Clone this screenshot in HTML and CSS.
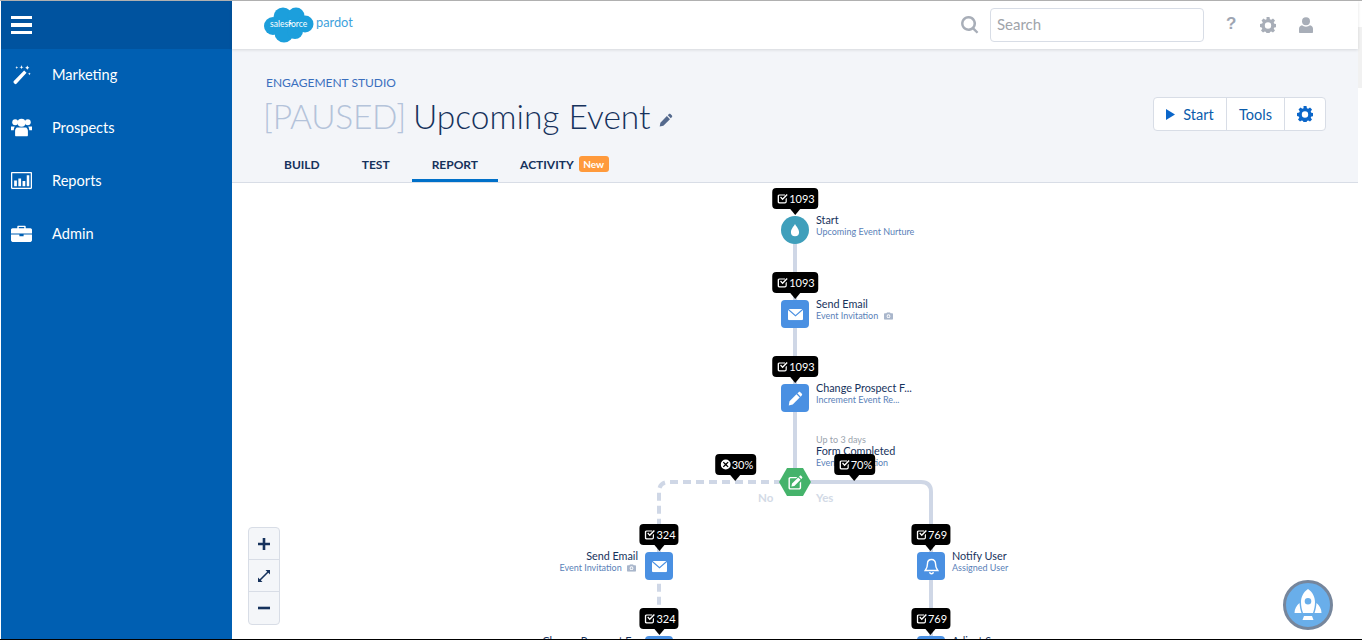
FILE: index.html

```html
<!DOCTYPE html>
<html lang="en">
<head>
<meta charset="UTF-8">
<meta name="viewport" content="width=device-width, initial-scale=1.0">
<title>Upcoming Event - Engagement Studio</title>
<link rel="stylesheet" href="styles.css">
</head>
<body>

<svg class="sprite" width="0" height="0">
  <symbol id="i-check" viewBox="0 0 12 12"><path d="M2.200 1.500h6.300v1.300H2.600c-.4 0-.7.300-.7.700v5.800c0 .4.300.7.700.7h5.800c.4 0 .7-.3.7-.7V6.600l1.300-1.300v4c0 1.200-.9 2.100-2 2.100H2.200c-1.100 0-2-.9-2-2.100V3.500c0-1.100.9-2 2-2z"/><path d="M3.100 4.900l1-1 1.700 1.700L10.300 1l1.100 1.100-5.600 5.700z"/></symbol>
  <symbol id="i-cross" viewBox="0 0 12 12"><path fill-rule="evenodd" d="M6 .6a5.400 5.400 0 1 0 0 10.800A5.400 5.400 0 0 0 6 .6zM3.800 3l2.200 2 2.200-2 .9.900-2.100 2.100 2.100 2.100-.9.900L6 7 3.800 9l-.9-.9L5 6 2.900 3.900z"/></symbol>
  <symbol id="i-camera" viewBox="0 0 12 10"><path fill-rule="evenodd" d="M4 0h4l.8 1.400H11c.6 0 1 .4 1 1V9c0 .6-.4 1-1 1H1c-.6 0-1-.4-1-1V2.400c0-.6.4-1 1-1h2.200zM6 2.800a2.500 2.500 0 1 0 0 5 2.500 2.500 0 0 0 0-5zM6 4a1.300 1.300 0 1 1 0 2.600A1.300 1.300 0 0 1 6 4z"/></symbol>
  <symbol id="i-mail" viewBox="0 0 16 12"><path d="M.6 0h14.800L8 6.400z"/><path d="M0 1.200v9.600C0 11.500.5 12 1.200 12h13.600c.7 0 1.200-.5 1.200-1.200V1.200L8 8.200z"/></symbol>
  <symbol id="i-pencil" viewBox="0 0 16 16"><path d="M11.400 1.200c.5-.5 1.200-.5 1.700 0l1.700 1.700c.5.500.5 1.200 0 1.700L13.500 6 10 2.500zM9 3.500L12.500 7 5 14.500 .8 15.500 1.600 11z"/></symbol>
  <symbol id="i-gear" viewBox="0 0 16 16"><path fill-rule="evenodd" d="M6.500 0h3l.4 2.200 1.300.6L13 1.500l2 2.100-1.300 1.800.6 1.300 2.200.4v3l-2.200.4-.6 1.300 1.300 1.800-2 2-1.800-1.200-1.300.5-.4 2.100h-3l-.4-2.100-1.300-.5L3 15.600l-2-2 1.300-1.800-.6-1.300L0 10V7l2.200-.4.600-1.300L1.500 3.500l2-2 1.800 1.300 1.300-.6zM8 5.300a3.200 3.200 0 1 0 0 6.400 3.200 3.200 0 0 0 0-6.400z"/></symbol>
</svg>

<aside class="sidebar">
  <div class="sidebar-top">
    <span class="burger"><i></i><i></i><i></i></span>
  </div>
  <nav class="nav-list">
    <a class="nav-item" href="#">
      <svg class="nav-icon" viewBox="0 0 20 20"><path d="M12.500 6.200l2.300 2.200L5.200 18.800c-.5.500-1.200.5-1.700 0l-.8-.8c-.5-.5-.5-1.200 0-1.700z"/><path d="M10 1l.5 1.500L12 3l-1.500.5L10 5l-.5-1.500L8 3l1.500-.5zM15.500 1.500l.7 1.300 1.300.7-1.300.7-.7 1.300-.7-1.300-1.300-.7 1.300-.7zM5.500 2l.4 1 1 .4-1 .4-.4 1-.4-1-1-.4 1-.4zM17.500 8l.4 1 1 .4-1 .4-.4 1-.4-1-1-.4 1-.4z"/></svg>
      Marketing
    </a>
    <a class="nav-item" href="#">
      <svg class="nav-icon" viewBox="0 0 20 20"><circle cx="4" cy="5" r="2.800"/><circle cx="16" cy="5" r="2.800"/><circle cx="10" cy="5.500" r="3.800"/><path d="M0 9h3.600c-.6 1-1 2.200-1 3.500H0zM20 9h-3.600c.6 1 1 2.200 1 3.500H20zM5.500 10h9c1 .8 1.600 2 1.600 3.300v4c0 .6-.4 1-.8 1H4.700c-.4 0-.8-.4-.8-1v-4c0-1.300.6-2.500 1.600-3.300z"/></svg>
      Prospects
    </a>
    <a class="nav-item" href="#">
      <svg class="nav-icon" viewBox="0 0 20 20"><path fill-rule="evenodd" d="M1 2h18c.6 0 1 .4 1 1v14c0 .6-.4 1-1 1H1c-.6 0-1-.4-1-1V3c0-.6.4-1 1-1zm.2 1.200v13.600h17.600V3.200z"/><path d="M3 10h2.600v5.500H3zM7 8h2.600v7.500H7zM11 10.500h2.600v5H11zM15 5h2.400v10.500H15z"/></svg>
      Reports
    </a>
    <a class="nav-item" href="#">
      <svg class="nav-icon" viewBox="0 0 20 20"><path fill-rule="evenodd" d="M7 2.500h6c.6 0 1 .4 1 1V5h4.500c.8 0 1.500.7 1.500 1.500V10H0V6.500C0 5.700.7 5 1.500 5H6V3.500c0-.6.4-1 1-1zM7.400 3.800V5h5.200V3.800z"/><path d="M0 11h8v1.500h4V11h8v5.500c0 .8-.7 1.500-1.500 1.500h-17C.7 18 0 17.300 0 16.500z"/></svg>
      Admin
    </a>
  </nav>
</aside>

<div class="main">
  <header class="topbar">
    <div class="logo">
      <svg class="logo-cloud" viewBox="0 0 50 36">
        <g fill="#1c9fdc">
          <circle cx="19" cy="10" r="9.500"/><circle cx="32" cy="9" r="8.500"/><circle cx="41" cy="17" r="8.500"/>
          <circle cx="9" cy="19" r="9"/><circle cx="20" cy="26" r="9.500"/><circle cx="31" cy="24" r="8"/>
        </g>
        <text x="6" y="20" class="logo-sf">salesforce</text>
      </svg>
      <span class="logo-name">pardot</span>
    </div>
    <div class="top-tools">
      <svg class="search-icon" viewBox="0 0 18 18"><path fill-rule="evenodd" d="M7.500 0a7.500 7.500 0 0 1 6 12l3.900 3.900-1.700 1.700-3.900-3.900A7.500 7.500 0 1 1 7.500 0zm0 2.500a5 5 0 1 0 0 10 5 5 0 0 0 0-10z"/></svg>
      <input class="search-box" type="text" placeholder="Search">
      <span class="help">?</span>
      <svg class="top-icon" viewBox="0 0 16 16"><use href="#i-gear"/></svg>
      <svg class="top-icon user-icon" viewBox="0 0 14 16"><circle cx="7" cy="4.200" r="4"/><path d="M3 8.300c1 .9 2.400 1.400 4 1.400s3-.5 4-1.400c1.800.5 3 1.700 3 3.400V15c0 .6-.4 1-1 1H1c-.6 0-1-.4-1-1v-3.300c0-1.700 1.200-2.900 3-3.400z"/></svg>
    </div>
  </header>

  <section class="subhead">
    <div class="subhead-row">
      <div>
        <div class="crumb">ENGAGEMENT STUDIO</div>
        <h1 class="title"><span class="paused">[PAUSED]</span> Upcoming Event <svg class="title-edit" viewBox="0 0 16 16"><use href="#i-pencil"/></svg></h1>
      </div>
      <div class="btn-group">
        <button class="btn btn-start"><svg class="play" viewBox="0 0 10 12"><path d="M0 0l10 6-10 6z"/></svg>Start</button>
        <button class="btn btn-tools">Tools</button>
        <button class="btn btn-gear"><svg viewBox="0 0 16 16"><use href="#i-gear"/></svg></button>
      </div>
    </div>
    <div class="tabs">
      <a class="tab" href="#">BUILD</a>
      <a class="tab" href="#">TEST</a>
      <a class="tab active" href="#">REPORT</a>
      <a class="tab" href="#">ACTIVITY <span class="badge-new">New</span></a>
    </div>
  </section>

  <section class="canvas">
    <svg class="links" width="1126" height="456">
      <path class="link" d="M563 47V299"/>
      <path class="link" d="M563 299H689Q699 299 699 309V467"/>
      <path class="link dashed" d="M563 299H437Q427 299 427 309V467"/>
    </svg>

    <div class="node circle n-start"><svg viewBox="0 0 12 16"><path d="M6 0c1 2.500 5 6 5 10a5 5 0 0 1-10 0C1 6 5 2.500 6 0z"/></svg></div>
    <div class="node square n-mail1"><svg viewBox="0 0 16 12"><use href="#i-mail"/></svg></div>
    <div class="node square n-field1"><svg viewBox="0 0 16 16"><use href="#i-pencil"/></svg></div>
    <div class="node hex n-form"><svg viewBox="0 0 16 16"><path d="M2.500 2h7.500L8.600 3.500H2.800c-.5 0-.8.3-.8.8v8.900c0 .5.3.8.8.8h8.900c.5 0 .8-.3.8-.8V8.500L14 7v6.500c0 1.200-1 2-2 2H2.500c-1.200 0-2-1-2-2V4c0-1.200 1-2 2-2z"/><path d="M12.500 1c.5-.5 1.200-.5 1.700 0l.8.8c.5.500.5 1.200 0 1.700l-.8.800-2.500-2.500zM10.900 2.600l2.500 2.500-6.600 6.500-3.200.7.700-3.200z"/></svg></div>
    <div class="node square n-mail2"><svg viewBox="0 0 16 12"><use href="#i-mail"/></svg></div>
    <div class="node square n-notify"><svg class="bell" viewBox="0 0 16 18" fill="none"><path d="M8 1.500c-2.800 0-4.300 2-4.300 4.600 0 4.400-1.500 5.800-2.400 7.100h13.400c-.9-1.300-2.400-2.700-2.400-7.100C12.300 3.500 10.800 1.500 8 1.500zM6 15c.2 1 1 1.800 2 1.800s1.800-.8 2-1.800"/></svg></div>
    <div class="node square n-field2"></div>
    <div class="node square n-adjust"></div>

    <div class="label l-start"><div class="label-title">Start</div><div class="label-sub">Upcoming Event Nurture</div></div>
    <div class="label l-mail1"><div class="label-title">Send Email</div><div class="label-sub">Event Invitation <svg class="cam" viewBox="0 0 12 10"><use href="#i-camera"/></svg></div></div>
    <div class="label l-field1"><div class="label-title">Change Prospect F...</div><div class="label-sub">Increment Event Re...</div></div>
    <div class="label l-form"><div class="label-note">Up to 3 days</div><div class="label-title">Form Completed</div><div class="label-sub">Event Registration</div></div>
    <div class="label left l-mail2"><div class="label-title">Send Email</div><div class="label-sub">Event Invitation <svg class="cam" viewBox="0 0 12 10"><use href="#i-camera"/></svg></div></div>
    <div class="label l-notify"><div class="label-title">Notify User</div><div class="label-sub">Assigned User</div></div>
    <div class="label left l-field2"><div class="label-title">Change Prospect F...</div></div>
    <div class="label l-adjust"><div class="label-title">Adjust Score</div></div>

    <span class="branch b-no">No</span>
    <span class="branch b-yes">Yes</span>

    <div class="stat s-start"><svg viewBox="0 0 12 12"><use href="#i-check"/></svg>1093</div>
    <div class="stat s-mail1"><svg viewBox="0 0 12 12"><use href="#i-check"/></svg>1093</div>
    <div class="stat s-field1"><svg viewBox="0 0 12 12"><use href="#i-check"/></svg>1093</div>
    <div class="stat s-no"><svg viewBox="0 0 12 12"><use href="#i-cross"/></svg>30%</div>
    <div class="stat s-yes"><svg viewBox="0 0 12 12"><use href="#i-check"/></svg>70%</div>
    <div class="stat s-mail2"><svg viewBox="0 0 12 12"><use href="#i-check"/></svg>324</div>
    <div class="stat s-notify"><svg viewBox="0 0 12 12"><use href="#i-check"/></svg>769</div>
    <div class="stat s-field2"><svg viewBox="0 0 12 12"><use href="#i-check"/></svg>324</div>
    <div class="stat s-adjust"><svg viewBox="0 0 12 12"><use href="#i-check"/></svg>769</div>

    <div class="zoom-box">
      <button class="zoom-btn"><svg viewBox="0 0 12 12"><path d="M4.700 0h2.600v4.700H12v2.600H7.300V12H4.700V7.300H0V4.700h4.700z"/></svg></button>
      <button class="zoom-btn"><svg viewBox="0 0 12 12"><path d="M7.500 0H12v4.500L10.300 2.800 2.800 10.300 4.500 12H0V7.500l1.700 1.700L9.200 1.700z"/></svg></button>
      <button class="zoom-btn"><svg viewBox="0 0 12 12"><path d="M0 4.700h12v2.600H0z"/></svg></button>
    </div>

    <div class="rocket">
      <svg viewBox="0 0 30 32"><path fill-rule="evenodd" d="M15 0c4.500 3 7 8 7 13 0 4-.8 7.500-2 11H10c-1.200-3.500-2-7-2-11 0-5 2.500-10 7-13zm0 9a3.300 3.300 0 1 0 0 6.600 3.300 3.300 0 0 0 0-6.600z"/><path d="M6.500 14c.2 3.500 1 7 2 10H1.500c0-4 2-7.500 5-10zM23.500 14c3 2.500 5 6 5 10h-7c1-3 1.800-6.500 2-10zM11 27h8l1.500 4h-11z"/></svg>
    </div>
  </section>
</div>

<div class="page-edge"><div class="edge-mark"></div></div>

</body>
</html>
```

FILE: styles.css

```css
* {
  box-sizing: border-box;
}
body {
  margin: 0;
  height: 640px;
  overflow: hidden;
  display: flex;
  border-top: 1px solid #b0b0b0;
  border-bottom: 1px solid #000;
  font-family: Lato, "Open Sans", sans-serif;
  background-color: #fff;
  color: #16325c;
}
button {
  font-family: inherit;
}
.sprite {
  position: absolute;
}

/* sidebar */
.sidebar {
  width: 231px;
  margin-left: 1px;
  background-color: #005fb2;
  flex-shrink: 0;
}
.sidebar-top {
  height: 48px;
  background-color: #00539f;
  display: flex;
  align-items: center;
  padding-left: 10px;
}
.burger {
  display: flex;
  flex-direction: column;
  gap: 4px;
  width: 21px;
}
.burger i {
  display: block;
  height: 3.500px;
  background-color: #fff;
}
.nav-list {
  margin-top: -1px;
}
.nav-item {
  height: 53px;
  display: flex;
  align-items: center;
  gap: 20px;
  padding-left: 10px;
  color: #fff;
  font-size: 14.600px;
  text-decoration: none;
}
.nav-icon {
  width: 21px;
  height: 21px;
  fill: #fff;
}

/* top bar */
.main {
  width: 1126px;
  flex-shrink: 0;
  display: flex;
  flex-direction: column;
}
.topbar {
  height: 48px;
  flex-shrink: 0;
  display: flex;
  justify-content: space-between;
  align-items: center;
  background-color: #fff;
  box-shadow: 0 1px 3px rgba(0, 0, 0, 0.12);
  position: relative;
  padding-left: 32px;
}
.logo {
  display: flex;
  align-items: center;
  gap: 2px;
  margin-bottom: 1px;
}
.logo-cloud {
  width: 50px;
  height: 36px;
}
.logo-sf {
  font-size: 8.500px;
  fill: #fff;
}
.logo-name {
  font-size: 12.800px;
  color: #3fa2dc;
  margin-bottom: 5px;
}
.top-tools {
  display: flex;
  align-items: center;
  padding-right: 44px;
}
.search-icon {
  width: 18px;
  height: 18px;
  fill: #a8aeb8;
  margin-right: 11px;
}
.search-box {
  width: 214px;
  height: 34px;
  border: 1px solid #d8dde6;
  border-radius: 4px;
  padding: 0 6px 2px 6px;
  font-family: inherit;
  font-size: 15px;
  margin-right: 22px;
}
.search-box::placeholder {
  color: #a0a4aa;
}
.help {
  width: 10px;
  font-family: "Liberation Sans", sans-serif;
  font-weight: 700;
  font-size: 17px;
  color: #9ea5b2;
  margin-right: 24px;
  margin-bottom: 2px;
}
.top-icon {
  width: 16px;
  height: 16px;
  fill: #a8aeb8;
  margin-right: 23px;
}
.user-icon {
  width: 14px;
  margin-right: 1px;
}

/* page header */
.subhead {
  height: 134px;
  flex-shrink: 0;
  background-color: #f3f5f9;
  border-bottom: 1px solid #d8dde6;
  padding: 25px 32px 0 32px;
  display: flex;
  flex-direction: column;
}
.subhead-row {
  display: flex;
  justify-content: space-between;
  align-items: flex-start;
}
.crumb {
  font-size: 12px;
  line-height: 18px;
  color: #3a6fbe;
  margin-left: 2px;
}
.title {
  margin: 4px 0 0 -1px;
  font-size: 33.500px;
  line-height: 40px;
  font-weight: 300;
  color: #16325c;
  display: flex;
  align-items: center;
  gap: 7px;
}
.paused {
  color: #b4c3da;
  letter-spacing: -0.3px;
}
.title-edit {
  width: 14px;
  height: 14px;
  fill: #54698d;
  margin-left: 1px;
  margin-top: 8px;
}
.btn-group {
  display: flex;
  height: 34px;
  margin-top: 23px;
  background-color: #fff;
  border: 1px solid #d8dde6;
  border-radius: 4px;
}
.btn {
  height: 32px;
  border: none;
  background: none;
  font-size: 14.500px;
  color: #0b5cab;
  padding: 0;
  display: flex;
  align-items: center;
  justify-content: center;
}
.btn-start {
  width: 72px;
  gap: 8px;
}
.btn-tools {
  width: 59px;
  border-left: 1px solid #d8dde6;
  border-right: 1px solid #d8dde6;
}
.btn-gear {
  width: 40px;
}
.btn-gear svg {
  width: 16px;
  height: 16px;
  fill: #0b66c9;
}
.play {
  width: 9px;
  height: 11px;
  fill: #0b66c9;
}
.tabs {
  display: flex;
  gap: 2px;
  margin-top: auto;
  height: 33px;
}
.tab {
  display: flex;
  align-items: center;
  height: 33px;
  font-size: 12px;
  font-weight: 700;
  color: #16325c;
  text-decoration: none;
  padding: 0 20px;
  gap: 5px;
  border-bottom: 3px solid transparent;
}
.tab.active {
  border-bottom-color: #0070c9;
}
.badge-new {
  background-color: #ff9a3c;
  color: #fff;
  font-size: 10px;
  line-height: 16px;
  padding: 0 4.500px;
  border-radius: 3px;
}

/* diagram */
.canvas {
  flex: 1;
  position: relative;
  overflow: hidden;
  background-color: #fff;
}
.links {
  position: absolute;
  left: 0;
  top: 0;
}
.link {
  fill: none;
  stroke: #cfd7e6;
  stroke-width: 4;
}
.dashed {
  stroke-dasharray: 8 5;
}
.node {
  position: absolute;
  width: 28px;
  height: 28px;
  display: flex;
  align-items: center;
  justify-content: center;
  fill: #fff;
}
.square {
  background-color: #4a90e2;
  border-radius: 4px;
}
.square svg {
  width: 15px;
  height: 15px;
}
.circle {
  background-color: #3f9fbb;
  border-radius: 50%;
}
.circle svg {
  width: 10px;
  height: 13px;
}
.hex {
  width: 32px;
  background-color: #45b36b;
  clip-path: polygon(25% 0, 75% 0, 100% 50%, 75% 100%, 25% 100%, 0 50%);
}
.hex svg {
  width: 15px;
  height: 15px;
}
.square .bell {
  width: 15px;
  height: 17px;
  stroke: #fff;
  stroke-width: 1.500;
}
.n-start { left: 549px; top: 33px; }
.n-mail1 { left: 549px; top: 117px; }
.n-field1 { left: 549px; top: 201px; }
.n-form { left: 547px; top: 285px; }
.n-mail2 { left: 413px; top: 369px; }
.n-notify { left: 685px; top: 369px; }
.n-field2 { left: 413px; top: 453px; }
.n-adjust { left: 685px; top: 453px; }

.label {
  position: absolute;
  white-space: nowrap;
}
.label-title {
  font-size: 10.800px;
  line-height: 12px;
  color: #16325c;
}
.label-sub {
  font-size: 9px;
  line-height: 12px;
  color: #5a7fb8;
}
.label-note {
  font-size: 9px;
  line-height: 11px;
  color: #9aa3ad;
}
.left {
  text-align: right;
}
.cam {
  width: 9px;
  height: 8px;
  fill: #a9b6cb;
  margin-left: 3px;
  vertical-align: -1px;
}
.left .cam {
  margin-right: 2px;
}
.l-start { left: 584px; top: 31px; }
.l-mail1 { left: 584px; top: 115px; }
.l-field1 { left: 584px; top: 199px; }
.l-form { left: 584px; top: 251px; }
.l-mail2 { right: 720px; top: 367px; }
.l-notify { left: 720px; top: 367px; }
.l-field2 { right: 720px; top: 452px; }
.l-adjust { left: 720px; top: 452px; }

.branch {
  position: absolute;
  font-size: 11.500px;
  font-weight: 700;
  color: #d3dae6;
}
.b-no { left: 526px; top: 308px; }
.b-yes { left: 584px; top: 308px; }

.stat {
  position: absolute;
  height: 21px;
  background-color: #000;
  color: #fff;
  border-radius: 4px;
  font-size: 11px;
  padding: 0 3px 0 5px;
  display: flex;
  align-items: center;
  gap: 1px;
  transform: translateX(-50%);
  fill: #fff;
}
.stat svg {
  width: 11px;
  height: 11px;
}
.stat::after {
  content: "";
  position: absolute;
  left: 50%;
  top: 100%;
  margin-left: -5px;
  border: 5px solid transparent;
  border-bottom: 0;
  border-top: 6px solid #000;
}
.s-start { left: 563px; top: 5px; }
.s-mail1 { left: 563px; top: 89px; }
.s-field1 { left: 563px; top: 173px; }
.s-no { left: 503.500px; top: 271px; }
.s-yes { left: 622.500px; top: 271px; }
.s-mail2 { left: 427px; top: 341px; }
.s-notify { left: 698.500px; top: 341px; }
.s-field2 { left: 427px; top: 425px; }
.s-adjust { left: 698.500px; top: 425px; }

/* zoom buttons */
.zoom-box {
  position: absolute;
  left: 16px;
  top: 344px;
  width: 32px;
  display: flex;
  flex-direction: column;
  background-color: #f4f6f9;
  border: 1px solid #d8dde6;
  border-radius: 4px;
}
.zoom-btn {
  height: 32px;
  border: none;
  background: none;
  padding: 0;
  display: flex;
  align-items: center;
  justify-content: center;
  border-bottom: 1px solid #d8dde6;
}
.zoom-btn:last-child {
  border-bottom: none;
}
.zoom-btn svg {
  width: 12px;
  height: 12px;
  fill: #16325c;
}

.rocket {
  position: absolute;
  left: 1051px;
  top: 397px;
  width: 50px;
  height: 50px;
  border-radius: 50%;
  background-color: #69aeea;
  border: 3px solid #76869c;
  display: flex;
  align-items: center;
  justify-content: center;
  fill: #fff;
}
.rocket svg {
  width: 30px;
  height: 32px;
}

/* strip right of the page */
.page-edge {
  flex: 1;
  background-color: #fff;
  padding-top: 26px;
}
.edge-mark {
  height: 61px;
  background-color: #f1f1f1;
}
```
